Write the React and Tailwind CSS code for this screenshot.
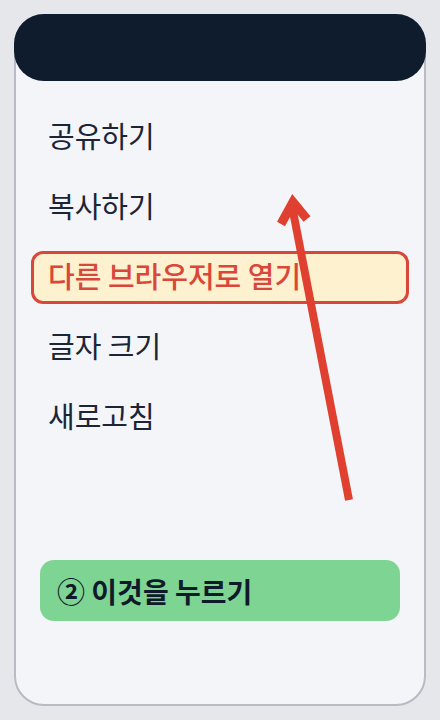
import React from 'react';

const items = ['공유하기', '복사하기', '다른 브라우저로 열기', '글자 크기', '새로고침'];

// Red guide arrow drawn over the menu
function GuideArrow() {
  return (
    <svg
      className="pointer-events-none absolute left-0 top-0"
      width="440"
      height="720"
      viewBox="0 0 440 720"
      fill="none"
    >
      <line x1="349" y1="500" x2="292" y2="206" stroke="#e0402f" strokeWidth="8" />
      <polyline
        points="281,224 293,202 307,219"
        stroke="#e0402f"
        strokeWidth="9"
        strokeLinejoin="miter"
        fill="none"
      />
    </svg>
  );
}

export default function App() {
  return (
    <div
      className="relative h-[720px] w-[440px] bg-[#e5e7eb] pt-[14px] pl-[14px]"
      style={{ fontFamily: '"Noto Sans CJK KR", "Noto Sans", sans-serif' }}
    >
      <div className="flex h-[692px] w-[412px] flex-col rounded-[30px] border-2 border-[#b8bac4] bg-[#f3f5f8]">
        {/* top bar */}
        <div className="-mx-[2px] -mt-[2px] h-[67px] shrink-0 rounded-[30px] bg-[#0e1c2e]" />

        {/* menu */}
        <div className="flex flex-col px-[15px] pt-[19px]">
          {items.map((label, i) =>
            i === 2 ? (
              <div key={label} className="flex h-[70px] items-end pb-[6px]">
                <div className="flex h-[53px] w-full items-center rounded-[12px] border-[3px] border-[#d9473a] bg-[#fdf1cf] px-[14px] pb-[5px]">
                  <span className="text-[29px] font-medium leading-none text-[#d9473a]">{label}</span>
                </div>
              </div>
            ) : (
              <div key={label} className="flex h-[70px] items-center px-[17px]">
                <span className="text-[29px] leading-none text-[#1b2535]">{label}</span>
              </div>
            )
          )}
        </div>

        {/* step hint */}
        <div className="mx-[24px] mt-[110px] flex h-[61px] items-center rounded-[14px] bg-[#7ed492] pl-[17px]">
          <span className="text-[28px] font-bold leading-none text-[#0f1b2a]">② 이것을 누르기</span>
        </div>
      </div>

      <GuideArrow />
    </div>
  );
}
